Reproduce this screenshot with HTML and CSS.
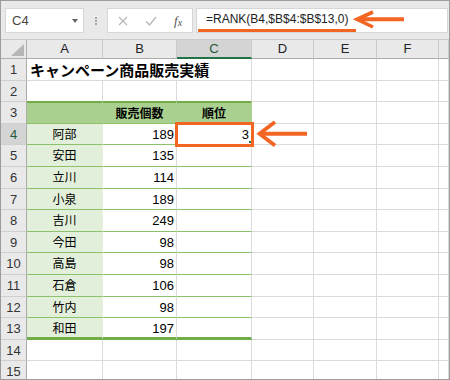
FILE: index.html
```html
<!DOCTYPE html>
<html lang="ja">
<head>
<meta charset="utf-8">
<title>RANK</title>
<link rel="stylesheet" href="styles.css">
</head>
<body>
<div class="frame">
  <div class="toolbar">
    <div class="namebox"><span class="nb-text">C4</span><span class="caret"></span></div>
    <div class="grip"><i></i><i></i><i></i></div>
    <div class="fxbtns">
      <svg class="ico" width="12" height="12" viewBox="0 0 12 12"><path d="M2 2 L10 10 M10 2 L2 10" stroke="#b9b9b9" stroke-width="1.3" fill="none"/></svg>
      <svg class="ico" width="12" height="12" viewBox="0 0 12 12"><path d="M1 6.5 L4.5 10 L11 2" stroke="#b9b9b9" stroke-width="1.4" fill="none"/></svg>
      <span class="fx">f<span class="fxx">x</span></span>
    </div>
    <div class="formula"><span class="ftext">=RANK(B4,$B$4:$B$13,0)</span></div>
  </div>
  <div class="sheet">
    <div class="c corner"><span class="tri"></span></div>
    <div class="c ch">A</div><div class="c ch">B</div><div class="c ch selcol">C</div><div class="c ch">D</div><div class="c ch">E</div><div class="c ch">F</div><div class="c ch"></div>

    <div class="c rh">1</div><div class="c title">キャンペーン商品販売実績</div><div class="c"></div><div class="c"></div><div class="c"></div><div class="c"></div>

    <div class="c rh">2</div><div class="c pre"></div><div class="c pre"></div><div class="c pre"></div><div class="c"></div><div class="c"></div><div class="c"></div><div class="c"></div>

    <div class="c rh">3</div><div class="c th"></div><div class="c th">販売個数</div><div class="c th">順位</div><div class="c"></div><div class="c"></div><div class="c"></div><div class="c"></div>

    <div class="c rh selrow">4</div><div class="c nm">阿部</div><div class="c num">189</div><div class="c cc sel">3</div><div class="c"></div><div class="c"></div><div class="c"></div><div class="c"></div>
    <div class="c rh">5</div><div class="c nm">安田</div><div class="c num">135</div><div class="c cc"></div><div class="c"></div><div class="c"></div><div class="c"></div><div class="c"></div>
    <div class="c rh">6</div><div class="c nm">立川</div><div class="c num">114</div><div class="c cc"></div><div class="c"></div><div class="c"></div><div class="c"></div><div class="c"></div>
    <div class="c rh">7</div><div class="c nm">小泉</div><div class="c num">189</div><div class="c cc"></div><div class="c"></div><div class="c"></div><div class="c"></div><div class="c"></div>
    <div class="c rh">8</div><div class="c nm">吉川</div><div class="c num">249</div><div class="c cc"></div><div class="c"></div><div class="c"></div><div class="c"></div><div class="c"></div>
    <div class="c rh">9</div><div class="c nm">今田</div><div class="c num">98</div><div class="c cc"></div><div class="c"></div><div class="c"></div><div class="c"></div><div class="c"></div>
    <div class="c rh">10</div><div class="c nm">高島</div><div class="c num">98</div><div class="c cc"></div><div class="c"></div><div class="c"></div><div class="c"></div><div class="c"></div>
    <div class="c rh">11</div><div class="c nm">石倉</div><div class="c num">106</div><div class="c cc"></div><div class="c"></div><div class="c"></div><div class="c"></div><div class="c"></div>
    <div class="c rh">12</div><div class="c nm">竹内</div><div class="c num">98</div><div class="c cc"></div><div class="c"></div><div class="c"></div><div class="c"></div><div class="c"></div>
    <div class="c rh">13</div><div class="c nm last">和田</div><div class="c num last">197</div><div class="c cc last"></div><div class="c"></div><div class="c"></div><div class="c"></div><div class="c"></div>

    <div class="c rh">14</div><div class="c"></div><div class="c"></div><div class="c"></div><div class="c"></div><div class="c"></div><div class="c"></div><div class="c"></div>
    <div class="c rh">15</div><div class="c"></div><div class="c"></div><div class="c"></div><div class="c"></div><div class="c"></div><div class="c"></div><div class="c"></div>
  </div>
  <svg class="arrows" width="450" height="380" viewBox="0 0 450 380">
    <g stroke="#f26522" fill="none" stroke-linejoin="miter" stroke-linecap="butt">
      <line x1="404" y1="19.3" x2="358" y2="19.3" stroke-width="4"/>
      <polyline points="373,12 357,19.3 373,27" stroke-width="3.6"/>
      <line x1="307" y1="133.7" x2="261" y2="133.7" stroke-width="4"/>
      <polyline points="275,122 259.5,133.7 275,145.5" stroke-width="3.8"/>
    </g>
  </svg>
</div>
</body>
</html>
```
FILE: styles.css
```css
html, body {
  margin: 0;
  padding: 0;
  background: #ffffff;
}

.frame {
  position: relative;
  width: 450px;
  height: 380px;
  box-sizing: border-box;
  border: 1px solid #9c9c9c;
  overflow: hidden;
  background: #ffffff;
  font-family: "Liberation Sans", "Noto Sans CJK JP", sans-serif;
}

/* ---------- formula bar ---------- */
.toolbar {
  height: 39px;
  box-sizing: border-box;
  background: #e9e9e9;
  border-bottom: 1px solid #c9c9c9;
  display: flex;
  align-items: flex-start;
  padding: 7px 1px 0 4px;
}

.namebox {
  width: 79px;
  height: 25px;
  box-sizing: border-box;
  background: #ffffff;
  border: 1px solid #d6d6d6;
  display: flex;
  align-items: center;
  justify-content: space-between;
  padding: 0 5px 0 6px;
}

.nb-text {
  font-size: 13px;
  color: #444444;
}

.caret {
  width: 0;
  height: 0;
  border-left: 3px solid transparent;
  border-right: 3px solid transparent;
  border-top: 4px solid #666666;
}

.grip {
  margin-left: 10px;
  width: 3px;
  height: 25px;
  display: flex;
  flex-direction: column;
  justify-content: center;
  align-items: center;
  gap: 1px;
}

.grip i {
  display: block;
  width: 2px;
  height: 2px;
  background: #a5a5a5;
}

.fxbtns {
  margin-left: 10px;
  width: 86px;
  height: 25px;
  box-sizing: border-box;
  background: #ffffff;
  border: 1px solid #d6d6d6;
  display: flex;
  align-items: center;
  padding: 0 0 0 9px;
  gap: 16px;
}

.ico {
  display: block;
}

.fx {
  font-family: "Liberation Serif", serif;
  font-style: italic;
  font-size: 13px;
  color: #555555;
  margin-left: 1px;
}

.fxx {
  font-size: 10px;
  position: relative;
  top: 1px;
}

.formula {
  margin-left: 3px;
  flex: 1;
  height: 25px;
  box-sizing: border-box;
  background: #ffffff;
  border: 1px solid #d6d6d6;
  padding-left: 1px;
}

.ftext {
  display: inline-block;
  height: 23px;
  box-sizing: border-box;
  line-height: 20px;
  font-size: 12px;
  color: #222222;
  padding: 0 8px;
  border-bottom: 3px solid #f26522;
}

/* ---------- sheet ---------- */
.sheet {
  display: grid;
  grid-template-columns: 26px 76px 74px 75px 62px 63px 62px 10px;
  grid-template-rows: 19px;
  grid-auto-rows: 21.6px;
}

.c {
  box-sizing: border-box;
  border-right: 1px solid #dadada;
  border-bottom: 1px solid #dadada;
  font-size: 13px;
  line-height: 20px;
  color: #000000;
  white-space: nowrap;
  overflow: hidden;
  padding: 0 3px;
  font-family: "Liberation Sans", "Noto Sans CJK JP", sans-serif;
}

.corner {
  background: #e9e9e9;
  border-right-color: #b0b0b0;
  border-bottom-color: #b0b0b0;
  position: relative;
  padding: 0;
}

.tri {
  position: absolute;
  right: 2px;
  bottom: 2px;
  width: 0;
  height: 0;
  border-left: 13px solid transparent;
  border-bottom: 12px solid #b6b6b6;
}

.ch {
  background: #e9e9e9;
  border-right-color: #cacaca;
  border-bottom-color: #ababab;
  text-align: center;
  line-height: 18px;
  color: #222222;
  font-size: 13px;
}

.selcol {
  background: #d4d4d4;
  border-bottom: 2px solid #217346;
  color: #1e5b38;
}

.rh {
  background: #e9e9e9;
  border-right-color: #ababab;
  border-bottom-color: #cfcfcf;
  text-align: center;
  color: #333333;
  padding: 0;
  line-height: 21px;
}

.selrow {
  background: #d4d4d4;
  color: #1e5b38;
}

.title {
  grid-column: span 3;
  font-family: "Noto Sans CJK JP", sans-serif;
  font-weight: bold;
  font-size: 15px;
  line-height: 21px;
  padding-left: 3px;
  overflow: visible;
}

.pre {
  border-bottom-color: #70ad47;
}

.th {
  background: #a9d08e;
  border-right-color: #a9d08e;
  border-bottom-color: #8cc168;
  box-shadow: inset 0 1px 0 #70ad47;
  font-family: "Noto Sans CJK JP", sans-serif;
  font-weight: bold;
  font-size: 12px;
  text-align: center;
  line-height: 21px;
}

.nm {
  background: #e2efda;
  border-right-color: #e2efda;
  border-bottom-color: #8cc168;
  text-align: center;
  font-family: "Noto Sans CJK JP", sans-serif;
  font-size: 12px;
  line-height: 20px;
}

.num {
  text-align: right;
  border-bottom-color: #8cc168;
  padding-right: 2px;
  line-height: 21px;
}

.cc {
  border-bottom-color: #8cc168;
  text-align: right;
  padding-right: 2px;
  line-height: 21px;
}

.last {
  border-bottom: 3px solid #70ad47;
}

.sel {
  position: relative;
  overflow: visible;
}

.sel::after {
  content: "";
  position: absolute;
  left: -2px;
  top: -2px;
  width: 79px;
  height: 25px;
  box-sizing: border-box;
  border: 3px solid #f26522;
}

.sel::before {
  content: "";
  position: absolute;
  left: 72px;
  top: 17px;
  width: 2px;
  height: 2px;
  background: #217346;
}

.arrows {
  position: absolute;
  left: -1px;
  top: -1px;
  pointer-events: none;
}
```
